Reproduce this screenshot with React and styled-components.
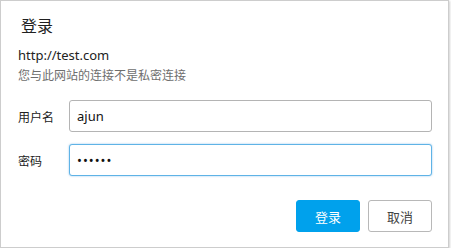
import React from 'react';
import styled, { createGlobalStyle } from 'styled-components';

const GlobalStyle = createGlobalStyle`
	html, body {
		margin: 0;
		padding: 0;
		background: #ffffff;
	}
	body {
		font-family: 'Noto Sans', 'Noto Sans CJK SC', sans-serif;
	}
`;

const Dialog = styled.div`
	box-sizing: border-box;
	width: 449px;
	height: 248px;
	padding: 12px 16px 0 17px;
	background: #ffffff;
	border: 1px solid #cdcdcd;
	box-shadow: 1px 1px 2px rgba(0, 0, 0, 0.18);
	display: flex;
	flex-direction: column;
`;

const Title = styled.h1`
	margin: 0 0 0 3px;
	font-family: 'Noto Sans CJK SC', sans-serif;
	font-size: 16px;
	font-weight: normal;
	color: #1f1f1f;
	line-height: 24px;
`;

const Site = styled.p`
	margin: 9px 0 0;
	font-family: 'Noto Sans', 'Noto Sans CJK SC', sans-serif;
	font-size: 13px;
	color: #222222;
	line-height: 18px;
`;

const Notice = styled.p`
	margin: 2px 0 0;
	font-family: 'Noto Sans CJK SC', sans-serif;
	font-size: 12px;
	color: #6e6e6e;
	line-height: 18px;
`;

const Form = styled.form`
	margin-top: 16px;
	display: flex;
	flex-direction: column;
	gap: 12px;
`;

const Row = styled.label`
	display: flex;
	align-items: center;
	height: 32px;
`;

const Label = styled.span`
	width: 51px;
	font-family: 'Noto Sans CJK SC', sans-serif;
	font-size: 12px;
	color: #222222;
`;

const Input = styled.input`
	box-sizing: border-box;
	flex: 1;
	height: 32px;
	padding: 0 7px;
	border: 1px solid ${p => (p.focused ? '#5fb3e6' : '#b4b4b4')};
	border-radius: 3px;
	box-shadow: ${p => (p.focused ? '0 0 2px rgba(60, 150, 220, 0.6)' : 'none')};
	outline: none;
	font-family: 'Noto Sans', sans-serif;
	font-size: 13px;
	color: #111111;
	letter-spacing: ${p => (p.type === 'password' ? '1px' : '0')};
`;

const Actions = styled.div`
	margin-top: 24px;
	display: flex;
	justify-content: flex-end;
	gap: 8px;
`;

const Button = styled.button`
	box-sizing: border-box;
	width: 64px;
	height: 32px;
	padding: 0;
	border-radius: 3px;
	border: 1px solid ${p => (p.primary ? '#00a1ec' : '#b8b8b8')};
	background: ${p => (p.primary ? '#00a1ec' : '#ffffff')};
	color: ${p => (p.primary ? '#ffffff' : '#444444')};
	font-family: 'Noto Sans CJK SC', sans-serif;
	font-size: 13px;
	cursor: pointer;
`;

const App = () => {
	return (
		<>
			<GlobalStyle />
			<Dialog>
				<Title>登录</Title>
				<Site>http://test.com</Site>
				<Notice>您与此网站的连接不是私密连接</Notice>

				<Form autoComplete="off" onSubmit={e => e.preventDefault()}>
					<Row>
						<Label>用户名</Label>
						<Input type="text" defaultValue="ajun" />
					</Row>
					<Row>
						<Label>密码</Label>
						<Input type="password" defaultValue="123456" focused />
					</Row>
				</Form>

				<Actions>
					<Button primary>登录</Button>
					<Button>取消</Button>
				</Actions>
			</Dialog>
		</>
	);
};

export default App;
